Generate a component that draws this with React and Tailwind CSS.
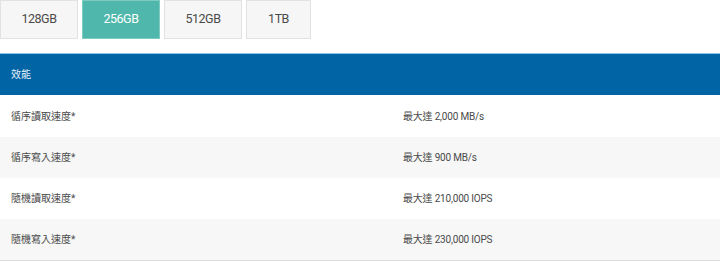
export default function App() {
  const tabs = ["128GB", "256GB", "512GB", "1TB"];
  const rows = [
    ["循序讀取速度*", "最大達 2,000 MB/s", "bg-white h-[42px]"],
    ["循序寫入速度*", "最大達 900 MB/s", "bg-[#f7f7f7] h-[41px]"],
    ["隨機讀取速度*", "最大達 210,000 IOPS", "bg-white h-[41px]"],
    ["隨機寫入速度*", "最大達 230,000 IOPS", "bg-[#f7f7f7] h-[41px]"],
  ];
  return (
    <div
      className="w-[720px] h-[261px] bg-white overflow-hidden"
      style={{ fontFamily: 'Roboto, "Noto Sans CJK TC", sans-serif' }}
    >
      <div className="flex gap-[4px]">
        {tabs.map((t, i) => (
          <div
            key={t}
            className={
              "h-[39px] flex items-center justify-center text-[12.5px] tracking-[-0.5px] border " +
              (i === 3 ? "w-[65px] " : "w-[78px] ") +
              (i === 1
                ? "bg-[#4fb7ab] border-[#7ecbc2] text-white"
                : "bg-[#f6f6f6] border-[#e2e2e2] text-[#4a4a4a]")
            }
          >
            {t}
          </div>
        ))}
      </div>
      <div className="mt-[14px]">
        <div className="h-[42px] bg-[#0064a5] border-t border-[#8ec4e4] flex items-center px-[11px] text-[10px] text-[#e6f0f7]">
          效能
        </div>
        {rows.map(([a, b, cls]) => (
          <div key={a} className={"flex items-center text-[10px] text-[#4a4a4a] " + cls}>
            <div className="w-[392px] pl-[11px]">{a}</div>
            <div className="pl-[11px] tracking-[-0.2px]">{b}</div>
          </div>
        ))}
        <div className="h-px bg-[#dcdcdc]" />
      </div>
    </div>
  );
}
